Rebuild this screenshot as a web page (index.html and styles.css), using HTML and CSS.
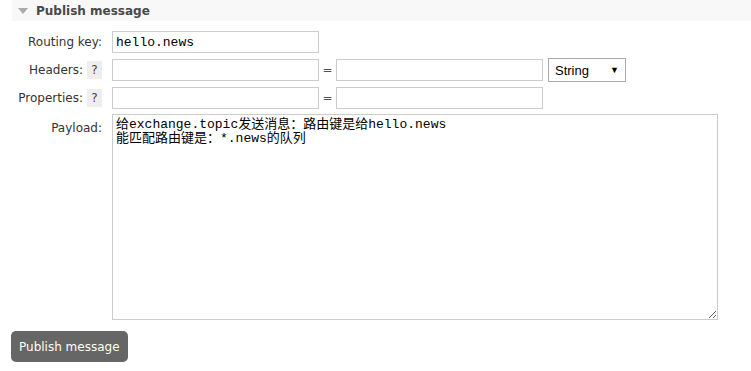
FILE: index.html
```html
<!DOCTYPE html>
<html lang="en">
  <head>
    <meta charset="utf-8" />
    <title>Publish message</title>
    <link rel="stylesheet" href="styles.css">
  </head>

  <body>
    <section class="panel">
      <h2 class="panelTitle"><span class="arrow"></span>Publish message</h2>

      <form class="publishForm">
        <div class="row">
          <label class="rowLabel" for="routingKey">Routing key:</label>
          <div class="rowFields">
            <input class="field mono" type="text" id="routingKey" value="hello.news" />
          </div>
        </div>

        <div class="row">
          <label class="rowLabel">Headers: <span class="help">?</span></label>
          <div class="rowFields">
            <input class="field" type="text" />
            <span class="equals">=</span>
            <input class="field" type="text" />
            <div class="typeSelect">String <span class="caret">&#9660;</span></div>
          </div>
        </div>

        <div class="row">
          <label class="rowLabel">Properties: <span class="help">?</span></label>
          <div class="rowFields">
            <input class="field" type="text" />
            <span class="equals">=</span>
            <input class="field" type="text" />
          </div>
        </div>

        <div class="row">
          <label class="rowLabel payloadLabel" for="payload">Payload:</label>
          <div class="rowFields">
            <textarea class="payload" id="payload">给exchange.topic发送消息：路由键是给hello.news
能匹配路由键是：*.news的队列</textarea>
          </div>
        </div>

        <button class="publishButton" type="button">Publish message</button>
      </form>
    </section>
  </body>
</html>
```

FILE: styles.css
```css
html,
body {
  margin: 0;
  background: #fff;
}

body {
  font-family: 'DejaVu Sans', Verdana, sans-serif;
  font-size: 12px;
  color: #333;
}

.panelTitle {
  margin: 0 0 0 12px;
  height: 21px;
  background: #f8f8f8;
  font-size: 12px;
  font-weight: 700;
  color: #484848;
  display: flex;
  align-items: center;
  padding-left: 6px;
}

.arrow {
  width: 0;
  height: 0;
  border-left: 5px solid transparent;
  border-right: 5px solid transparent;
  border-top: 6px solid #aaa;
  margin-right: 8px;
}

.publishForm {
  display: flex;
  flex-direction: column;
  padding-top: 10px;
}

.row {
  display: grid;
  grid-template-columns: 102px 1fr;
  column-gap: 10px;
  margin-bottom: 5px;
}

.rowLabel {
  text-align: right;
  display: flex;
  align-items: center;
  justify-content: flex-end;
  gap: 4px;
  color: #333;
}

.payloadLabel {
  align-items: flex-start;
  padding-top: 7px;
}

.help {
  display: inline-block;
  width: 15px;
  height: 18px;
  line-height: 18px;
  background: #eee;
  text-align: center;
  color: #444;
}

.rowFields {
  display: flex;
  align-items: center;
}

.field {
  width: 207px;
  height: 22px;
  box-sizing: border-box;
  border: 1px solid #ccc;
  padding: 1px 3px;
  font-size: 12px;
  margin: 0;
}

.mono {
  font-family: 'Liberation Mono', monospace;
  font-size: 13px;
  color: #000;
}

.equals {
  width: 17px;
  text-align: center;
  color: #555;
}

.typeSelect {
  margin-left: 5px;
  width: 78px;
  height: 24px;
  box-sizing: border-box;
  border: 1px solid #aaa;
  font-family: 'Liberation Sans', Arial, sans-serif;
  font-size: 13px;
  color: #000;
  display: flex;
  align-items: center;
  justify-content: space-between;
  padding: 0 6px;
}

.caret {
  font-size: 9px;
}

.payload {
  width: 606px;
  height: 206px;
  box-sizing: border-box;
  border: 1px solid #ccc;
  margin: 0;
  padding: 3px 3px;
  font-family: 'Liberation Mono', 'Noto Sans CJK SC', monospace;
  font-size: 13px;
  line-height: 14px;
  color: #000;
  resize: both;
}

.publishButton {
  align-self: flex-start;
  margin: 6px 0 0 11px;
  height: 31px;
  padding: 0 8px;
  border: none;
  border-radius: 5px;
  background: #666;
  color: #fffef0;
  font-family: 'DejaVu Sans', Verdana, sans-serif;
  font-size: 12px;
}
```
